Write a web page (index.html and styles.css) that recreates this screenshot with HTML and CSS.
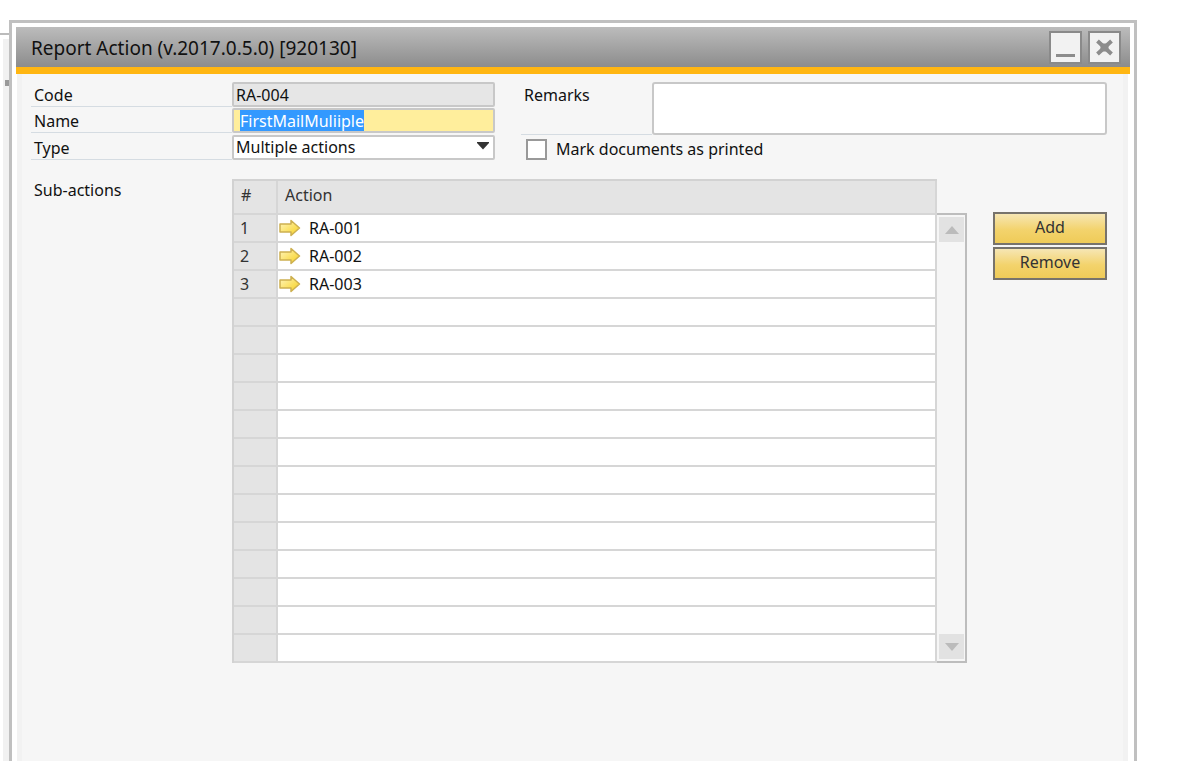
FILE: index.html
```html
<!DOCTYPE html>
<html lang="en">

    <head>
        <meta charset="UTF-8">
        <meta name="viewport" content="width=device-width, initial-scale=1.0">
        <title>Report Action</title>
        <link rel="stylesheet" href="styles.css">
    </head>

    <body>
        <!-- Window lying behind -->
        <div class="back-window"></div>

        <main class="window">
            <header class="titlebar">
                <h1>Report Action (v.2017.0.5.0) [920130]</h1>
                <button type="button" class="win-btn" aria-label="Minimize">
                    <svg width="29" height="29" viewBox="0 0 29 29"><path d="M5 22.500H24" stroke="#8c8c8c" stroke-width="3"/></svg>
                </button>
                <button type="button" class="win-btn" aria-label="Close">
                    <svg width="29" height="29" viewBox="0 0 29 29"><path d="M7.500 8L21.500 21M21.500 8L7.500 21" stroke="#8c8c8c" stroke-width="4"/><path d="M10.500 10.500H18.500V18.500H10.500Z" fill="#8c8c8c"/></svg>
                </button>
            </header>

            <form class="content">
                <div class="top">
                    <div class="fields">
                        <div class="row">
                            <label for="code">Code</label>
                            <input type="text" id="code" class="field readonly" value="RA-004" readonly>
                        </div>
                        <div class="row">
                            <label for="name">Name</label>
                            <input type="text" id="name" class="field active" value="FirstMailMuliiple" spellcheck="false">
                        </div>
                        <div class="row">
                            <label for="type">Type</label>
                            <div class="select">
                                <select id="type" class="field">
                                    <option>Multiple actions</option>
                                </select>
                                <svg class="arrow" width="14" height="8" viewBox="0 0 14 8"><path d="M1 0H13V1L7 7.500L1 1Z" fill="#333"/></svg>
                            </div>
                        </div>
                    </div>

                    <div class="extra">
                        <div class="remarks">
                            <label for="remarks">Remarks</label>
                            <textarea id="remarks"></textarea>
                        </div>
                        <label class="check"><input type="checkbox"> Mark documents as printed</label>
                    </div>
                </div>

                <div class="sub">
                    <div class="sub-label">Sub-actions</div>
                    <table class="grid">
                        <thead>
                            <tr><th class="num">#</th><th>Action</th></tr>
                        </thead>
                        <tbody id="rows"></tbody>
                    </table>
                    <div class="scroll">
                        <button type="button" aria-label="Scroll up"><svg width="14" height="8" viewBox="0 0 14 8"><path d="M0 8H14L7 0Z" fill="#bbb"/></svg></button>
                        <button type="button" aria-label="Scroll down"><svg width="14" height="8" viewBox="0 0 14 8"><path d="M0 0H14L7 8Z" fill="#bbb"/></svg></button>
                    </div>
                    <div class="buttons">
                        <button type="button" class="btn">Add</button>
                        <button type="button" class="btn">Remove</button>
                    </div>
                </div>
            </form>
        </main>

        <!-- Gradient shared by the link arrows -->
        <svg width="0" height="0" class="defs">
            <linearGradient id="gold" x1="0" y1="0" x2="1" y2="1">
                <stop offset="0" stop-color="#fff6c0"/>
                <stop offset="1" stop-color="#f7d01c"/>
            </linearGradient>
        </svg>

        <script>
            const actions = ['RA-001', 'RA-002', 'RA-003'];
            const totalRows = 16;
            const arrow = '<svg width="22" height="18" viewBox="0 0 22 18"><path d="M1 5H12V1.500L20.500 9L12 16.500V13H1Z" fill="url(#gold)" stroke="#cdb050" stroke-width="1.500" stroke-linejoin="round"/></svg>';

            let html = '';
            for (let i = 0; i < totalRows; i++) {
                const action = actions[i];
                html += '<tr><td class="num">' + (action ? i + 1 : '') + '</td><td>' +
                    (action ? '<span class="link">' + arrow + action + '</span>' : '') + '</td></tr>';
            }
            document.getElementById('rows').innerHTML = html;

            // The name is ready to be typed over
            const nameInput = document.getElementById('name');
            nameInput.focus();
            nameInput.select();
        </script>
    </body>

</html>
```
FILE: styles.css
```css
* {
    box-sizing: border-box;
}

body {
    margin: 0;
    padding: 20px 44px 0 9px;
    background: #fff;
}

body,
input,
select,
textarea,
button {
    font-family: "Noto Sans", "Open Sans", sans-serif;
    font-size: 16px;
    line-height: 21px;
    color: #111;
}

.back-window {
    position: absolute;
    left: 0;
    top: 33px;
    width: 9px;
    bottom: 0;
    border-top: 2px solid #bbb;
    background: linear-gradient(#999, #999) 5px 45px / 4px 6px no-repeat,
        linear-gradient(#f1f1f1, #f1f1f1) 3px 4px no-repeat;
}

.window {
    position: relative;
    min-height: calc(100vh - 20px);
    padding: 4px 4px 0;
    border: 3px solid #c0c0c0;
    border-bottom: none;
    background: #fff;
    display: flex;
    flex-direction: column;
}

.titlebar {
    display: flex;
    align-items: center;
    gap: 6px;
    height: 47px;
    padding: 0 9px 0 15px;
    background: linear-gradient(#bcbcbc, #8c8c8c);
    border-bottom: 7px solid #ffb612;
}

.titlebar h1 {
    flex: 1;
    margin: 0;
    padding-top: 2px;
    font-size: 19px;
    font-weight: normal;
}

.win-btn {
    width: 33px;
    height: 33px;
    padding: 0;
    border: 2px solid #8a8a8a;
    background: #f2f2f2;
}

.win-btn svg {
    display: block;
}

.content {
    flex: 1;
    margin: 0 2px 0 1px;
    padding: 8px 16px 0 9px;
    background: #f6f6f6;
    border: solid #f2f2f2;
    border-width: 0 5px;
}

.top {
    display: flex;
    gap: 26px;
}

.fields {
    display: grid;
    gap: 1px;
}

.row {
    display: flex;
    height: 25px;
}

.row label {
    width: 201px;
    padding: 3px 3px 0;
    border-bottom: 1px solid #d5dce2;
}

.field {
    width: 263px;
    height: 25px;
    padding: 0 2px;
    border: 2px solid #c8c8c8;
    border-radius: 2px;
    background: #fff;
    outline: none;
}

.readonly {
    background: #e6e6e6;
}

.active {
    padding: 0 6px;
    background: #ffee9c;
}

.active::selection {
    background: #3399ff;
    color: #fff;
}

.select {
    position: relative;
}

select.field {
    display: block;
    appearance: none;
}

.arrow {
    position: absolute;
    right: 5px;
    top: 7px;
}

.extra {
    flex: 1;
}

.remarks {
    display: flex;
    height: 53px;
}

.remarks label {
    width: 131px;
    padding: 3px 3px 0;
    border-bottom: 1px solid #d5dce2;
}

textarea {
    flex: 1;
    min-width: 0;
    border: 2px solid #c8c8c8;
    border-radius: 3px;
    resize: none;
}

.check {
    display: flex;
    align-items: center;
    gap: 9px;
    margin-top: 4px;
    padding-left: 5px;
}

.check input {
    appearance: none;
    width: 21px;
    height: 21px;
    margin: 0;
    border: 2px solid #999;
    background: #fff;
}

.sub {
    display: flex;
    margin-top: 19px;
}

.sub-label {
    width: 201px;
    padding: 1px 3px;
}

.grid {
    flex: 1;
    border-spacing: 0;
    border: solid #d2d2d2;
    border-width: 2px 0 0 2px;
    table-layout: fixed;
}

.grid th,
.grid td {
    height: 28px;
    padding: 0 6px;
    border: solid #d6d6d6;
    border-width: 0 2px 2px 0;
    background: #fff;
    text-align: left;
    font-weight: normal;
}

.grid th {
    height: 34px;
    padding: 0 7px 4px;
    background: #e4e4e4;
    color: #333;
}

.grid .num {
    width: 44px;
    background: #e4e4e4;
    color: #333;
}

.grid td:last-child {
    padding: 0 1px;
}

.link {
    display: flex;
    align-items: center;
    gap: 8px;
}

.scroll {
    display: flex;
    flex-direction: column;
    justify-content: space-between;
    width: 30px;
    margin-top: 34px;
    padding: 2px;
    border: 2px solid #bdbdbd;
    border-left: none;
}

.scroll button {
    width: 25px;
    height: 25px;
    padding: 0;
    border: none;
    background: #e2e2e2;
}

.scroll svg {
    display: block;
    margin: auto;
}

.buttons {
    display: flex;
    flex-direction: column;
    gap: 2px;
    width: 114px;
    margin: 33px 0 0 26px;
}

.btn {
    height: 33px;
    padding: 0 0 3px;
    border: 2px solid #77736c;
    background: linear-gradient(#f6e6b4, #f3d36c 55%, #efcb58);
    color: #333;
}

.defs {
    position: absolute;
}
```
